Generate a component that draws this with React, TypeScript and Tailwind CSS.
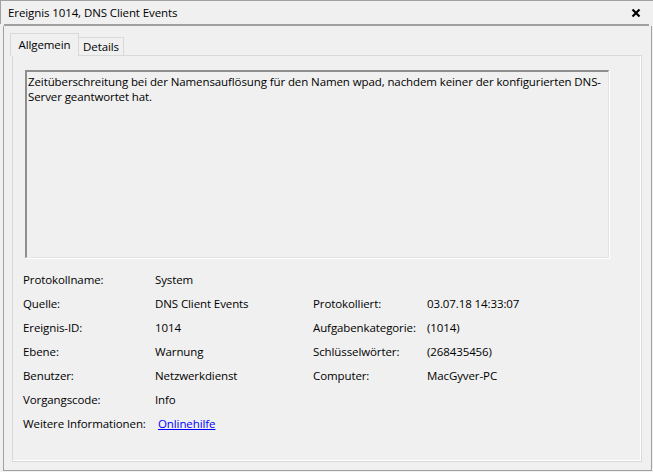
import React from "react";

type Row = {
  label: string;
  value: React.ReactNode;
  label2?: string;
  value2?: string;
};

const rows: Row[] = [
  { label: "Protokollname:", value: "System" },
  {
    label: "Quelle:",
    value: "DNS Client Events",
    label2: "Protokolliert:",
    value2: "03.07.18 14:33:07",
  },
  {
    label: "Ereignis-ID:",
    value: "1014",
    label2: "Aufgabenkategorie:",
    value2: "(1014)",
  },
  {
    label: "Ebene:",
    value: "Warnung",
    label2: "Schlüsselwörter:",
    value2: "(268435456)",
  },
  {
    label: "Benutzer:",
    value: "Netzwerkdienst",
    label2: "Computer:",
    value2: "MacGyver-PC",
  },
  { label: "Vorgangscode:", value: "Info" },
  {
    label: "Weitere Informationen:",
    value: (
      <a href="#" className="ml-[3px] text-[#0000ff] underline">
        Onlinehilfe
      </a>
    ),
  },
];

const CloseIcon = () => (
  <svg width="10" height="10" viewBox="0 0 10 10">
    <path d="M1.5 1.5 L8.5 8.5 M8.5 1.5 L1.5 8.5" stroke="#000" strokeWidth="2.2" />
  </svg>
);

const EventDetails = () => {
  return (
    <div className="flex flex-col">
      {rows.map((r) => (
        <div key={r.label} className="flex h-[24px] items-center">
          <div className="w-[132px] whitespace-nowrap">{r.label}</div>
          <div className="w-[158px] whitespace-nowrap">{r.value}</div>
          {r.label2 && (
            <>
              <div className="w-[114px] whitespace-nowrap">{r.label2}</div>
              <div className="whitespace-nowrap">{r.value2}</div>
            </>
          )}
        </div>
      ))}
    </div>
  );
};

export default function App() {
  return (
    <div
      className="w-[653px] h-[472px] bg-[#f0f0f0] text-black text-[11.5px] tracking-[-0.1px] leading-[15px] flex flex-col border-t border-[#a0a0a0] overflow-hidden"
      style={{ fontFamily: '"Open Sans", "Noto Sans", sans-serif' }}
    >
      {/* title bar */}
      <div className="h-[23px] flex items-center justify-between pl-[7px] pr-[12px] border-l border-[#a0a0a0]">
        <span>Ereignis 1014, DNS Client Events</span>
        <CloseIcon />
      </div>
      <div className="ml-[4px] mr-[4px] h-[2px] bg-[#a0a0a0]" />

      <div className="ml-[3px] w-[649px] h-[445px] border-l border-r border-b border-[#a0a0a0] flex flex-col">
        {/* tabs */}
        <div className="flex items-end h-[29px] pl-[6px]">
          <div className="relative z-10 w-[69px] h-[23px] -mb-px bg-[#f0f0f0] border border-b-0 border-[#d9d9d9] flex items-center justify-center pb-[1px]">
            Allgemein
          </div>
          <div className="w-[45px] h-[18px] bg-[#f0f0f0] border border-l-0 border-b-0 border-[#d9d9d9] flex items-center justify-center">
            Details
          </div>
        </div>

        {/* tab page */}
        <div className="ml-[8px] w-[630px] h-[407px] border border-[#d9d9d9] shadow-[inset_-1px_-1px_0_#ffffff] pt-[14px] pl-[10px]">
          <div className="ml-[2px] w-[584px] h-[188px] border-t-2 border-l-2 border-t-[#8e8e8e] border-l-[#8e8e8e] border-r border-b border-r-[#e3e3e3] border-b-[#e3e3e3] shadow-[1px_1px_0_#ffffff] px-[1px] pt-[3px] leading-[14.5px]">
            Zeitüberschreitung bei der Namensauflösung für den Namen wpad, nachdem
            keiner der konfigurierten DNS-Server geantwortet hat.
          </div>
          <div className="mt-[9px]">
            <EventDetails />
          </div>
        </div>
      </div>
    </div>
  );
}
